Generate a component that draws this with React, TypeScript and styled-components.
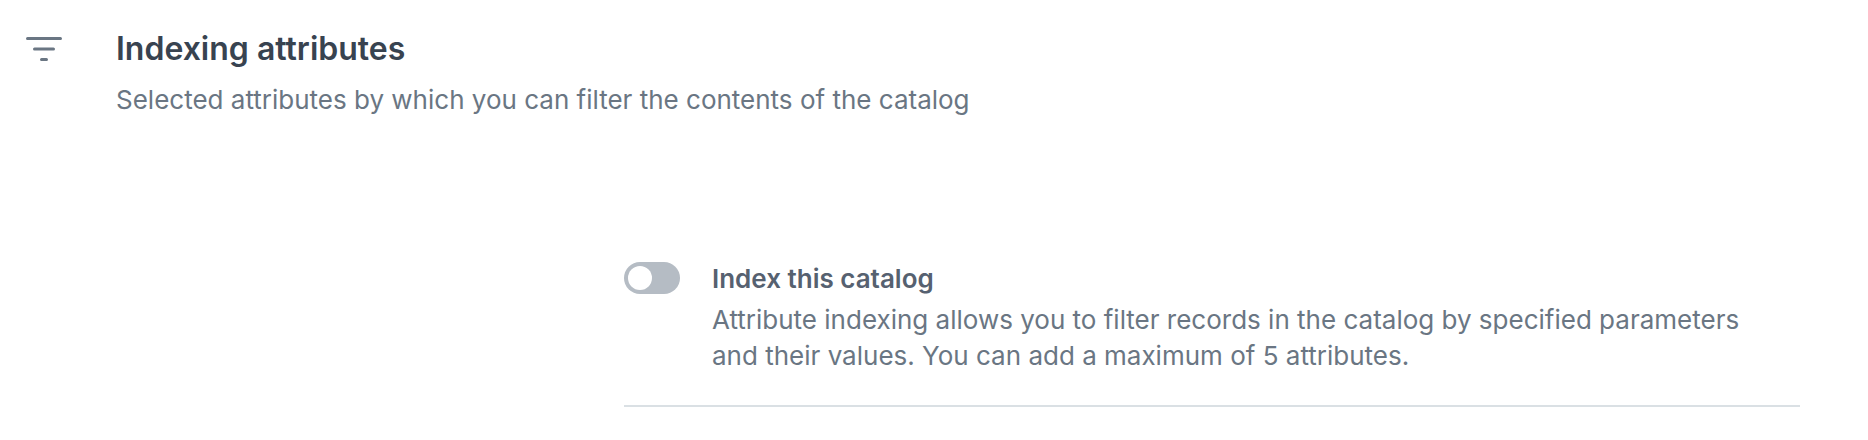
import { useState } from "react";
import styled, { createGlobalStyle } from "styled-components";

const GlobalStyle = createGlobalStyle`
  *, *::before, *::after {
    box-sizing: border-box;
  }
  body {
    margin: 0;
    background: #ffffff;
    font-family: Inter, "Liberation Sans", sans-serif;
  }
`;

const Section = styled.section`
  padding: 28px 68px 32px 24px;
`;

const Header = styled.header`
  display: flex;
  align-items: flex-start;
  gap: 52px;
`;

const FilterIcon = styled.svg`
  flex: none;
  width: 40px;
  height: 40px;
  stroke: #6a7683;
  stroke-width: 3;
  stroke-linecap: round;
`;

const Title = styled.h2`
  margin: 0 0 12px;
  font-size: 32px;
  font-weight: 600;
  line-height: 42px;
  color: #384350;
`;

const Text = styled.p`
  margin: 0;
  font-size: 26px;
  font-weight: 400;
  line-height: 36px;
  color: #6a7683;
`;

const Setting = styled.div`
  display: flex;
  align-items: flex-start;
  gap: 32px;
  margin: 138px 0 0 600px;
  padding-bottom: 31px;
  border-bottom: 2px solid #dae0e4;
`;

const Toggle = styled.input`
  appearance: none;
  flex: none;
  display: flex;
  width: 56px;
  height: 32px;
  margin: 6px 0 0;
  padding: 4px;
  border-radius: 16px;
  background: #b5bcc4;
  cursor: pointer;

  &::before {
    content: "";
    width: 24px;
    height: 24px;
    border-radius: 50%;
    background: #ffffff;
  }

  &:checked {
    justify-content: flex-end;
    background: #384350;
  }
`;

const SettingBody = styled.div`
  flex: 1;
  min-width: 0;
  padding-right: 24px;
`;

const SettingLabel = styled.label`
  display: block;
  margin-bottom: 5px;
  font-size: 26px;
  font-weight: 600;
  line-height: 36px;
  padding-top: 5px;
  color: #566170;
  cursor: pointer;
`;

export default function App() {
  const [indexed, setIndexed] = useState(false);

  return (
    <>
      <GlobalStyle />
      <Section>
        <Header>
          <FilterIcon viewBox="0 0 40 40" fill="none" aria-hidden="true">
            <path d="M3.5 10.5h33M10.5 21h19M17.5 31.5h5" />
          </FilterIcon>
          <div>
            <Title>Indexing attributes</Title>
            <Text>
              Selected attributes by which you can filter the contents of the
              catalog
            </Text>
          </div>
        </Header>
        <Setting>
          <Toggle
            id="index-catalog"
            type="checkbox"
            role="switch"
            aria-describedby="index-catalog-hint"
            checked={indexed}
            onChange={(event) => setIndexed(event.target.checked)}
          />
          <SettingBody>
            <SettingLabel htmlFor="index-catalog">
              Index this catalog
            </SettingLabel>
            <Text id="index-catalog-hint">
              Attribute indexing allows you to filter records in the catalog by
              specified parameters and their values. You can add a maximum of 5
              attributes.
            </Text>
          </SettingBody>
        </Setting>
      </Section>
    </>
  );
}
